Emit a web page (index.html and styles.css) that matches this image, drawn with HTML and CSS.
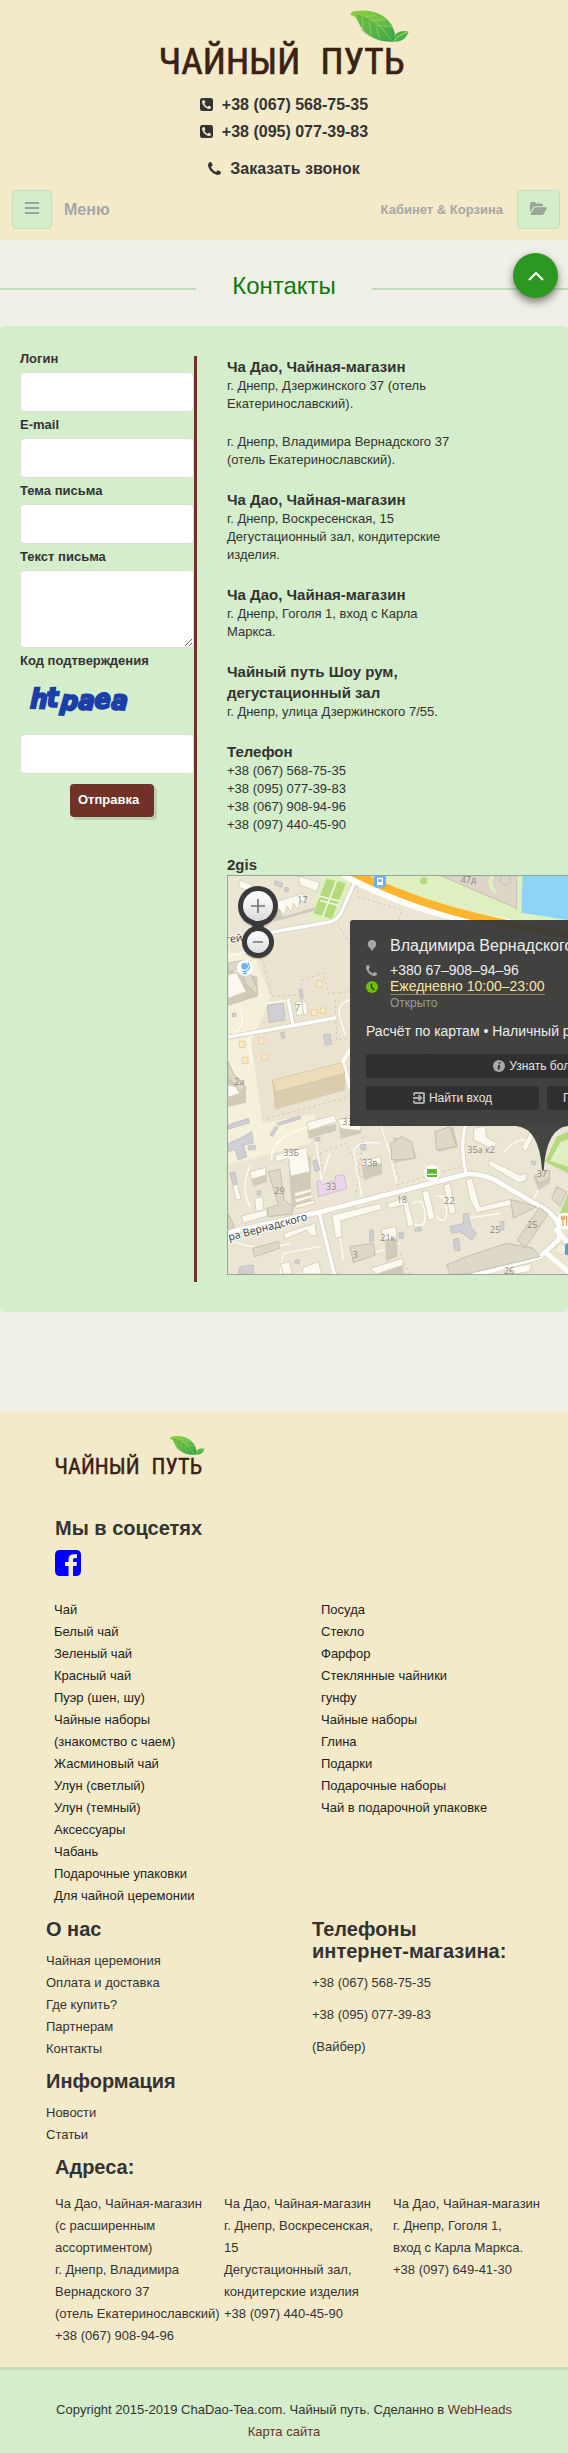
FILE: index.html
```html
<!DOCTYPE html>
<html lang="ru">
<head>
<meta charset="utf-8">
<meta name="viewport" content="width=device-width, initial-scale=1">
<title>Контакты — Чайный путь</title>
<link rel="stylesheet" href="styles.css">
</head>
<body>
<svg class="sprite" aria-hidden="true">
  <defs>
    <linearGradient id="leafA" x1="0" y1="0" x2="1" y2="1">
      <stop offset="0" stop-color="#8fd13a"/><stop offset=".5" stop-color="#6cc04a"/><stop offset="1" stop-color="#2f9c48"/>
    </linearGradient>
    <linearGradient id="knob" x1="0" y1="0" x2="0" y2="1">
      <stop offset="0" stop-color="#fff"/><stop offset="1" stop-color="#dcdcdc"/>
    </linearGradient>
    <symbol id="logo" viewBox="50 20 760 210">
      <path d="M655 85Q680 112 730 122L700 100Z" fill="#8a7f5a" opacity=".35"/>
      <path d="M628 44Q629 34 642 32C690 24 748 40 762 100L758 124C700 128 664 96 652 66Q644 46 628 44Z" fill="url(#leafA)"/>
      <path d="M644 38C690 52 722 72 752 122C728 118 680 106 658 76C650 56 650 46 644 38Z" fill="#4fae48" opacity=".55"/>
      <path d="M644 38Q710 56 752 120M672 48L706 46M690 60L734 58M706 76L752 78M664 50L666 84M684 62L690 102M706 80L716 114" fill="none" stroke="#b9e070" stroke-width="2" opacity=".8"/>
      <path d="M758 124C756 98 778 88 803 94C796 112 784 126 758 124Z" fill="#4bb248"/>
      <path d="M758 122Q774 102 800 95" fill="none" stroke="#a5dc6a" stroke-width="3"/>
      <text class="logo-text" x="52" y="220">ЧАЙНЫЙ</text>
      <text class="logo-text" x="538" y="220">ПУТЬ</text>
    </symbol>
    <symbol id="handset" viewBox="0 0 1408 1408">
      <path d="M1408 1112q0 27-10 70.500t-21 68.500q-21 50-122 106-94 51-186 51-27 0-53-3.500t-57.500-12.500-47-14.500-55.500-20.500-49-18q-98-35-175-83-127-79-264-216t-216-264q-48-77-83-175-3-9-18-49t-20.500-55.500-14.500-47-12.500-57.500-3.500-53q0-92 51-186 56-101 106-122 25-11 68.500-21t70.500-10q14 0 21 3 18 6 53 76 11 19 30 54t35 63.500 31 53.500q3 4 17.500 25t21.500 35.500 7 28.500q0 20-28.500 50t-62 55-62 53-28.500 46q0 9 5 22.500t8.500 20.500 14 24 11.500 19q76 137 174 235t235 174q2 1 19 11.500t24 14 20.500 8.500 22.500 5q18 0 46-28.500t53-62 55-62 50-28.500q14 0 28.500 7t35.500 21.500 25 17.500q25 15 53.500 31t63.500 35 54 30q70 35 76 53 3 7 3 21z"/>
    </symbol>
    <symbol id="phone-square" viewBox="0 0 14 14">
      <path fill-rule="evenodd" d="M2.500 0h9A2.500 2.500 0 0 1 14 2.500v9a2.500 2.500 0 0 1-2.500 2.500h-9A2.500 2.500 0 0 1 0 11.500v-9A2.500 2.500 0 0 1 2.500 0ZM3.800 2.200C2.300 2.800 1.900 4 2.500 5.700c1 2.700 3 4.800 5.900 6 1.700.6 2.900.1 3.400-1.400.1-.5.1-.7-.2-.9l-1.800-1c-.4-.2-.7 0-1.500 1-.2.200-.4.200-.7 0-1.300-.7-2.200-1.600-2.900-2.900-.2-.3-.1-.5.100-.7 1-.8 1.200-1.100 1-1.500l-1-1.900c-.2-.3-.5-.3-1-.2Z"/>
    </symbol>
  </defs>
</svg>

<header class="header">
  <a class="brand" href="#" aria-label="Чайный путь"><svg class="brand-logo"><use href="#logo"/></svg></a>
  <div class="phones">
    <a href="tel:+380675687535"><svg class="ico"><use href="#phone-square"/></svg>+38 (067) 568-75-35</a>
    <a href="tel:+380950773983"><svg class="ico"><use href="#phone-square"/></svg>+38 (095) 077-39-83</a>
  </div>
  <a class="callback" href="#"><svg class="ico"><use href="#handset"/></svg>Заказать звонок</a>
  <div class="bar">
    <button class="bar-btn" type="button" aria-label="Меню"><svg width="14" height="12" viewBox="0 0 14 12"><path d="M0 1h14M0 6h14M0 11h14" stroke="currentColor" stroke-width="2"/></svg></button>
    <span class="bar-menu">Меню</span>
    <span class="bar-cart">Кабинет &amp; Корзина</span>
    <button class="bar-btn bar-btn-wide" type="button" aria-label="Кабинет и корзина"><svg width="17" height="13" viewBox="0 0 17 13"><path fill="currentColor" d="M0 10.500V1.500Q0 0 1.500 0H4.500Q6 0 6 1.500H11.500Q13 1.500 13 3V4.200H5.500Q4 4.200 3 5.400ZM.6 12.200 3.800 6.500Q4.500 5.300 6 5.300H16.200Q17.300 5.300 16.700 6.400L13.900 11.700Q13.200 13 11.700 13H1.200Q.1 13 .6 12.200Z"/></svg></button>
  </div>
</header>

<main class="main">
  <button class="to-top" type="button" aria-label="Наверх"><svg width="16" height="10" viewBox="0 0 16 10"><path d="M1 9 8 2l7 7" fill="none" stroke="#fff" stroke-width="2"/></svg></button>
  <h1 class="title">Контакты</h1>
  <section class="panel">
    <form class="form">
      <label for="login">Логин</label>
      <input id="login" type="text">
      <label for="email">E-mail</label>
      <input id="email" type="email">
      <label for="subject">Тема письма</label>
      <input id="subject" type="text">
      <label for="message">Текст письма</label>
      <textarea id="message"></textarea>
      <label for="code">Код подтверждения</label>
      <svg class="captcha" viewBox="0 0 120 50">
        <g class="captcha-text">
          <text x="10" y="34" transform="rotate(2 10 34)">h</text>
          <text x="27" y="33" transform="rotate(-2 27 33)">t</text>
          <text x="40" y="35" transform="rotate(6 40 35)">p</text>
          <text x="58" y="35" transform="rotate(4 58 35)">a</text>
          <text x="75" y="35" transform="rotate(-5 75 35)">e</text>
          <text x="91" y="35" transform="rotate(4 91 35)">a</text>
        </g>
      </svg>
      <input id="code" type="text">
      <button class="submit" type="submit">Отправка</button>
    </form>
    <div class="info">
      <div class="shop"><h2>Ча Дао, Чайная-магазин</h2><p>г. Днепр, Дзержинского 37 (отель Екатеринославский).</p><p class="next">г. Днепр, Владимира Вернадского 37 (отель Екатеринославский).</p></div>
      <div class="shop"><h2>Ча Дао, Чайная-магазин</h2><p>г. Днепр, Воскресенская, 15<br>Дегустационный зал, кондитерские изделия.</p></div>
      <div class="shop"><h2>Ча Дао, Чайная-магазин</h2><p>г. Днепр, Гоголя 1, вход с Карла Маркса.</p></div>
      <div class="shop"><h2>Чайный путь Шоу рум, дегустационный зал</h2><p>г. Днепр, улица Дзержинского 7/55.</p></div>
      <div class="shop"><h2>Телефон</h2><p>+38 (067) 568-75-35<br>+38 (095) 077-39-83<br>+38 (067) 908-94-96<br>+38 (097) 440-45-90</p></div>
      <h2>2gis</h2>
      <div class="map">
        <svg class="map-canvas" viewBox="24 48 1020 1194" preserveAspectRatio="xMinYMin slice">
          <path fill="#ebe5d3" d="M24 48H1044V1242H24Z"/>
          <!-- lawns and yards -->
          <path fill="#f4f0da" d="M24 270 110 300 150 410 95 560 128 790 290 740 270 850 24 915Z"/>
          <path fill="#eae3d0" d="M110 250 340 200 390 260V740L128 790 95 540 160 410Z"/>
          <path fill="#dff0c0" d="M430 48H1044V270L900 215 640 150Z"/>
          <path fill="#dff0c0" d="M310 48H400L340 185H265Z"/>
          <path fill="#b4da7c" d="M320 56 378 70 335 176 280 160Z"/>
          <path stroke="#eef7dc" stroke-width="5" fill="none" d="M350 62 308 170M296 108 362 124M300 122 356 136"/>
          <path fill="#ddd6c8" stroke="#c9c0b2" stroke-width="3" d="M664 48H890V145Z"/>
          <path stroke="#dff0c0" stroke-width="12" fill="none" d="M818 48Q800 75 828 98"/>
          <circle cx="856" cy="60" r="15" fill="none" stroke="#c4bcae" stroke-width="3"/>
          <circle cx="611" cy="62" r="11" fill="#b4da7c"/>
          <path fill="#8cd5f9" d="M907 48H1044V180L904 158Z"/>
          <path fill="#b4da7c" d="M1010 830 1044 815V940L975 905ZM1020 1060 1044 1000V1100Z"/>
          <path fill="#dff0c0" d="M1022 845 1044 838V920L990 902Z"/>
          <!-- footpaths -->
          <g fill="none" stroke="#cdc6b4" stroke-width="3" stroke-dasharray="7 9">
            <path d="M120 270 155 408 240 405 245 360 310 340 325 400 390 395M345 420 350 540 390 535M140 775 390 710M355 190 390 255M410 60 415 110 545 150 530 200M300 880 380 850 430 960M300 880 310 940M530 975 720 920M430 830 400 1060M540 1180 570 1242M480 800 540 960"/>
          </g>
          <g fill="none" stroke="#fdfcf8" stroke-width="4">
            <path d="M24 290 80 275M85 530 95 610M135 430 210 420M60 450Q80 500 40 520M390 420Q345 430 362 480L376 525M270 800Q150 830 155 900M280 780 290 860 310 1000M480 790 510 880 530 970M400 870Q420 840 480 850M330 880 310 940M400 870 425 1010M580 1030Q610 1010 615 1060T580 1090M650 1010Q680 1000 680 1050T650 1070M850 880Q900 820 930 850M970 960 930 1040M90 920Q60 980 90 1040M24 1135Q100 1180 210 1150M180 1242 190 1180 300 1160M360 1130 370 1200M740 1075 840 1060M460 1180 540 1150"/>
          </g>
          <!-- streets -->
          <g fill="none" stroke="#d9d2c2" stroke-linejoin="round" stroke-linecap="round">
            <path stroke-width="19" d="M24 1118 300 1056 740 942Q800 940 850 975L970 1045Q1030 1080 1015 1140L960 1190 760 1242"/>
            <path stroke-width="15" d="M298 1060 344 1242M738 940Q715 840 745 770M24 532 345 474M205 420 218 492M100 226 330 186Q350 180 362 160L410 56"/>
          </g>
          <g fill="none" stroke="#fff" stroke-linejoin="round" stroke-linecap="round">
            <path stroke-width="14" d="M20 1118 300 1056 740 942Q800 940 850 975L970 1045Q1030 1080 1015 1140L960 1190 760 1246M980 1180 1044 1235M1010 1110 1044 1150"/>
            <path stroke-width="10" d="M298 1060 344 1246M738 940Q715 840 745 770M20 532 345 474M205 420 218 492M100 226 330 186Q350 180 362 160L412 50M390 570 368 605 390 680"/>
            <path stroke-width="36" d="M380 40Q560 140 780 180T1060 230"/>
          </g>
          <path fill="none" stroke="#ffb62e" stroke-width="24" d="M400 38Q580 128 780 174T1060 224"/>
          <!-- building shadows -->
          <g fill="#d2cab9">
            <path d="M156 662 375 640V690L168 748ZM204 890H272V1030L215 1042ZM24 330 112 350V410L24 438ZM24 640 78 680V728L24 740ZM262 810 348 792V812L266 836ZM358 800 424 790V820L362 836ZM425 920 486 905V942L432 960ZM520 830 575 850 590 895 524 908ZM650 820 700 800 714 860 655 875ZM92 950 140 938V966L100 980ZM495 1140 532 1130V1190L498 1204ZM150 100 190 170 290 140V150L160 186ZM940 950 990 930V970L955 990ZM470 1220 550 1205V1242H480Z"/>
          </g>
          <path fill="#ecdcb8" stroke="#d4c297" stroke-width="2" d="M158 660 365 608 375 640 166 696Z"/>
          <path fill="#d9cdae" d="M158 665 168 698 375 642V690L165 748Z"/>
          <g fill="#fcfaf0" stroke="#d8d1bf" stroke-width="3">
            <path d="M60 60 130 90 120 110 55 80ZM235 48 300 68 290 95 240 75ZM150 130 250 100 260 130 240 120 235 150 220 130 215 158 200 138 195 166 175 145 160 180Z"/>
            <path d="M226 426 244 424 250 462 230 468ZM246 426 258 424 264 460 250 466Z"/>
            <path d="M260 788 344 765 350 785 266 812ZM354 780 388 770 425 795 420 812 362 806Z"/>
            <path d="M165 885 262 862V885L270 935 212 948 206 895 168 905Z"/>
            <path d="M90 935 138 922V945L94 958ZM38 975 52 972 64 1018 48 1020ZM104 1015 128 1010 132 1050 108 1055ZM64 1068 140 1048 142 1068 70 1090Z"/>
            <path d="M222 1000 276 985V995L226 1010ZM224 1018 280 1003V1012L228 1028ZM226 1036 284 1020V1030L230 1046Z"/>
            <path d="M425 902 480 890 485 910 430 920Z"/>
            <path d="M336 1065 480 1030 486 1048 362 1082 366 1130 346 1135ZM500 1030 560 1012 582 1095 564 1102 550 1035 508 1045Z"/>
            <path d="M606 995 625 990 645 1075 625 1082ZM670 975 690 970 708 1058 690 1064ZM738 960 756 954 780 1040 872 1018 876 1035 770 1058 750 1020Z"/>
            <path d="M762 805 796 798 800 832 830 850 820 868 760 840ZM808 900 900 945 922 940 918 962 895 968 805 915ZM905 860 935 810 945 820 918 875Z"/>
            <path d="M485 1108 528 1100 530 1135 490 1140ZM450 1225 548 1195 550 1215 470 1242ZM182 1212 208 1205 218 1242H190ZM190 1120 285 1090 290 1130 270 1125 260 1110 195 1138ZM250 1222 296 1205 305 1242H245ZM868 1225 935 1210 930 1235 880 1242Z"/>
            <path d="M24 345 50 338 78 395 24 415ZM24 675 48 680 60 700 24 712Z"/>
          </g>
          <g fill="#ddd8c7" stroke="#c5bfae" stroke-width="3">
            <path d="M24 310 72 300 112 385V405L80 375 60 325 24 335ZM24 605 40 640 75 680 60 695 24 650ZM145 935 180 928 192 1020 220 1040 215 1062 145 1070 142 1045 175 1035Z"/>
            <path d="M98 1165 176 1144 178 1165 104 1190ZM390 1160 460 1150 466 1185 400 1208ZM872 1018 950 1040 880 1075ZM958 1042 984 1062 915 1165 892 1140ZM680 1215 740 1190 860 1150 940 1165 960 1190 740 1242H690ZM1010 980 1040 995 1020 1040 995 1015ZM945 945 988 930 990 955 955 970ZM24 1060 44 1100 24 1110ZM512 850 545 830 575 845 585 895 515 900ZM645 815 690 800 710 860 650 870Z"/>
          </g>
          <g fill="#cfcfd4" stroke="#b5b5ba" stroke-width="2">
            <path d="M142 436 190 430 195 480 148 488ZM310 525 330 522 334 552 316 556ZM24 795 85 775 88 788 24 808ZM24 850 60 835 95 815 100 850 70 855 80 890 55 900 45 868 24 875ZM150 825 166 798 173 803 158 830ZM170 790 240 768 242 776 176 796ZM278 905 290 898 300 930 286 935ZM30 940 44 936 52 972 40 976ZM238 390 246 388 250 416 242 418Z"/>
            <path d="M165 62 188 70 184 82 164 74ZM195 82 206 84 204 96 194 94ZM182 518 192 516 194 534 185 535ZM420 855 436 852 438 868 424 870ZM36 460 48 460 48 470 38 470ZM84 858 106 856 106 868 86 870ZM690 1100 730 1090 730 1062 745 1060 752 1100 770 1120 755 1140 720 1115 695 1120ZM700 1138 716 1135 720 1172 704 1172ZM450 1110H460V1145H448ZM536 1118 550 1118V1135H538ZM585 1105 602 1100 604 1112 586 1114ZM840 1085H852V1110H842ZM112 992H122V1005H112ZM284 834 300 832 300 842 286 844ZM60 1220 100 1215V1240H55ZM225 1200H238V1210H226ZM935 902 948 905 944 916 934 912Z"/>
          </g>
          <path fill="#ead8ea" stroke="#d3b9d8" stroke-width="3" d="M290 965 302 962 306 974 346 962V948L372 944 380 985 296 1010Z"/>
          <g fill="#fde8c2" stroke="#e6cfa0" stroke-width="3">
            <path d="M290 362H306V381H290ZM274 449H290V467H274ZM116 533H132V551H116ZM58 544H75V562H58ZM67 592H84V610H67ZM125 582H142V599H125ZM301 444H317V461H301Z"/>
          </g>
          <circle cx="1022" cy="1167" r="15" fill="#f5f1da" stroke="#ddd5bd" stroke-width="3"/>
          <g class="map-num">
            <text x="722" y="69">47д</text><text x="232" y="130">17</text><text x="225" y="454">7</text><text x="43" y="674">2а</text>
            <text x="518" y="298">47</text><text x="400" y="462">49а</text><text x="918" y="354">53</text><text x="550" y="422">49</text><text x="390" y="592">35л</text><text x="608" y="575">35п</text>
            <text x="367" y="794">33г</text><text x="504" y="797">35Б к1</text><text x="742" y="878">35а к2</text><text x="190" y="887">33Б</text>
            <text x="426" y="917">33в</text><text x="163" y="1001">29</text><text x="318" y="989">33</text><text x="530" y="1028">18</text><text x="672" y="1031">22</text>
            <text x="481" y="1142">21к</text><text x="398" y="1194">3</text><text x="810" y="1120">25</text><text x="921" y="1103">25</text><text x="950" y="950">37</text><text x="852" y="1242">26</text><text x="870" y="766">5</text><text x="956" y="772">8а</text>
          </g>
          <g class="map-street">
            <text x="18" y="250" transform="rotate(-8 18 250)">гей</text>
            <text x="28" y="1143" transform="rotate(-15 28 1143)">ра Вернадского</text>
          </g>
          <!-- map pins -->
          <rect x="462" y="46" width="36" height="37" rx="7" fill="#6db3ea"/>
          <path fill="#fff" fill-rule="evenodd" d="M471 53H489V75H471ZM475 58V66H485V58ZM472 77H477V79H472ZM483 77H488V79H483Z"/>
          <circle cx="75" cy="324" r="24" fill="#fff"/>
          <circle cx="74" cy="319" r="10" fill="#6db3ea"/><path d="M84 308Q95 326 78 334H66M75 334V341M68 341H82" fill="none" stroke="#6db3ea" stroke-width="4"/>
          <circle cx="636" cy="939" r="24" fill="#fff"/><path fill="#5cb82b" d="M623 927H649Q651 927 651 929V941H621V929Q621 927 623 927ZM621 945H651V950Q651 951 649 951H623Q621 951 621 949Z"/>
          <circle cx="1034" cy="1083" r="25" fill="#fff"/><path d="M1024 1067V1078M1029 1067V1098M1034 1067V1078M1024 1077H1034M1040 1067V1098" stroke="#f08a2c" stroke-width="3"/>
          <rect x="1035" y="1150" width="40" height="36" rx="7" fill="#4ba0e4"/>
          <!-- callout tail -->
          <path fill="#3a3a3a" opacity=".94" d="M888 798H1048Q980 800 971 930H966Q958 804 888 798Z"/>
          <!-- zoom control -->
          <circle cx="114" cy="143" r="60" fill="#000" opacity=".18"/><circle cx="114" cy="250" r="48" fill="#000" opacity=".18"/>
          <path fill="#3a3a3a" d="M82 170H146L130 200 146 225H82L98 200Z"/>
          <circle cx="114" cy="138" r="60" fill="#3a3a3a"/><circle cx="114" cy="246" r="48" fill="#3a3a3a"/>
          <circle cx="114" cy="138" r="45" fill="url(#knob)"/><circle cx="114" cy="246" r="33" fill="url(#knob)"/>
          <path d="M93 138H135M114 117V159M99 246H129" stroke="#757575" stroke-width="5"/>
        </svg>
        <div class="popup">
          <div class="popup-row popup-name"><svg viewBox="0 0 12 14"><path d="M6 0C9 0 11 2 11 5 11 8 8 9 6 13 4 9 1 8 1 5 1 2 3 0 6 0Z"/></svg>Владимира Вернадского, 37</div>
          <div class="popup-row"><svg viewBox="0 0 12 12"><use href="#handset" width="11" height="11"/></svg>+380 67–908–94–96</div>
          <div class="popup-row"><svg class="open" viewBox="0 0 12 12"><circle cx="6" cy="6" r="6"/><path d="M5.500 2.500V6.500L8.500 9" fill="none" stroke="#333" stroke-width="1.500"/></svg><a href="#">Ежедневно 10:00–23:00</a></div>
          <div class="popup-state">Открыто</div>
          <div class="popup-pay">Расчёт по картам • Наличный расчёт</div>
          <div class="popup-actions">
            <button class="wide" type="button"><svg viewBox="0 0 12 12"><circle cx="6" cy="6" r="6"/><path d="M6.800 2.200 6.500 3.600M6.200 5 5.500 9.500" fill="none" stroke="#333" stroke-width="2"/></svg>Узнать больше</button>
            <button type="button"><svg viewBox="0 0 12 12"><path d="M1 3.500V2Q1 1 2 1H10Q11 1 11 2V10Q11 11 10 11H2Q1 11 1 10V8.500M0 6H8M5.500 3.300 8.200 6 5.500 8.700" fill="none" stroke="#aaa" stroke-width="2"/></svg>Найти вход</button>
            <button class="route" type="button">Проехать сюда</button>
          </div>
        </div>
      </div>
    </div>
  </section>
</main>

<footer class="footer">
  <a class="footer-brand" href="#" aria-label="Чайный путь"><svg class="footer-logo"><use href="#logo"/></svg></a>
  <h3 class="inset">Мы в соцсетях</h3>
  <a class="social" href="#" aria-label="Facebook"><svg width="26" height="26" viewBox="0 0 26 26"><path fill="#00f" d="M5 0H21Q26 0 26 5V21Q26 26 21 26H18V16H21.500L22 12H18V9.500Q18 8 20 8H22V4.200H19Q13.500 4.200 13.500 9V12H10V16H13.500V26H5Q0 26 0 21V5Q0 0 5 0Z"/></svg></a>
  <div class="catalog">
    <ul>
      <li><a href="#">Чай</a></li><li><a href="#">Белый чай</a></li><li><a href="#">Зеленый чай</a></li><li><a href="#">Красный чай</a></li><li><a href="#">Пуэр (шен, шу)</a></li><li><a href="#">Чайные наборы<br>(знакомство с чаем)</a></li><li><a href="#">Жасминовый чай</a></li><li><a href="#">Улун (светлый)</a></li><li><a href="#">Улун (темный)</a></li><li><a href="#">Аксессуары</a></li><li><a href="#">Чабань</a></li><li><a href="#">Подарочные упаковки</a></li><li><a href="#">Для чайной церемонии</a></li>
    </ul>
    <ul>
      <li><a href="#">Посуда</a></li><li><a href="#">Стекло</a></li><li><a href="#">Фарфор</a></li><li><a href="#">Стеклянные чайники</a></li><li><a href="#">гунфу</a></li><li><a href="#">Чайные наборы</a></li><li><a href="#">Глина</a></li><li><a href="#">Подарки</a></li><li><a href="#">Подарочные наборы</a></li><li><a href="#">Чай в подарочной упаковке</a></li>
    </ul>
  </div>
  <div class="about">
    <div>
      <h3>О нас</h3>
      <ul><li><a href="#">Чайная церемония</a></li><li><a href="#">Оплата и доставка</a></li><li><a href="#">Где купить?</a></li><li><a href="#">Партнерам</a></li><li><a href="#">Контакты</a></li></ul>
      <h3>Информация</h3>
      <ul><li><a href="#">Новости</a></li><li><a href="#">Статьи</a></li></ul>
    </div>
    <div>
      <h3>Телефоны<br>интернет-магазина:</h3>
      <ul class="tel"><li>+38 (067) 568-75-35</li><li>+38 (095) 077-39-83</li><li>(Вайбер)</li></ul>
    </div>
  </div>
  <h3 class="inset">Адреса:</h3>
  <div class="addresses">
    <p>Ча Дао, Чайная-магазин<br>(с расширенным<br>ассортиментом)<br>г. Днепр, Владимира<br>Вернадского 37<br>(отель Екатеринославский)<br>+38 (067) 908-94-96</p>
    <p>Ча Дао, Чайная-магазин<br>г. Днепр, Воскресенская,<br>15<br>Дегустационный зал,<br>кондитерские изделия<br>+38 (097) 440-45-90</p>
    <p>Ча Дао, Чайная-магазин<br>г. Днепр, Гоголя 1,<br>вход с Карла Маркса.<br>+38 (097) 649-41-30</p>
  </div>
</footer>
<div class="copy">Copyright 2015-2019 ChaDao-Tea.com. Чайный путь. Сделанно в <a href="#">WebHeads</a><br><a href="#">Карта сайта</a></div>
</body>
</html>
```
FILE: styles.css
```css
* { box-sizing: border-box; }
body {
  margin: 0;
  background: #f1f0e8;
  color: #333;
  font: 13px/18px "Liberation Sans", Arial, sans-serif;
  overflow-x: hidden;
}
a { color: inherit; text-decoration: none; }
h1, h2, h3, p, ul { margin: 0; padding: 0; }
ul { list-style: none; }
svg { display: block; }
.sprite { position: absolute; width: 0; height: 0; }
.logo-text {
  font: 112px "Liberation Sans Narrow", "Roboto Condensed", "Liberation Sans", sans-serif;
  fill: #3b2113;
  stroke: #3b2113;
  stroke-width: 2px;
}

/* Header */
.header { background: #f3eaca; padding: 7px 0 11px; }
.brand { display: block; margin: 0 auto; width: 253px; }
.brand-logo { width: 253px; height: 70px; }
.phones { display: flex; flex-direction: column; align-items: center; padding-top: 14px; }
.phones a, .callback {
  display: flex;
  align-items: center;
  justify-content: center;
  gap: 9px;
  font-size: 16px;
  line-height: 27px;
  font-weight: bold;
}
.callback { margin: 10px 0 8px; }
.ico { width: 13px; height: 13px; fill: #333; }
.bar { display: flex; align-items: center; padding: 0 8px 0 12px; font-weight: bold; color: #a6a6a6; }
.bar-btn {
  display: grid;
  place-items: center;
  width: 40px;
  height: 39px;
  padding: 0 0 3px;
  color: #9ca697;
  background: #d4edca;
  border: 1px solid #c4dfbe;
  border-radius: 4px;
}
.bar-btn-wide { width: 43px; }
.bar-menu { font-size: 16px; margin-left: 12px; }
.bar-cart { margin: 0 14px 0 auto; }

/* Page body */
.main { position: relative; padding: 30px 0 100px; }
.to-top {
  position: absolute;
  top: 13px;
  right: 10px;
  display: grid;
  place-items: center;
  width: 45px;
  height: 45px;
  padding: 0;
  border: 0;
  border-radius: 50%;
  background: #2c9822;
  box-shadow: 0 4px 8px rgba(0, 0, 0, .5);
}
.title {
  display: flex;
  align-items: center;
  gap: 36px;
  color: #0b7a0b;
  font-size: 24px;
  line-height: 32px;
  font-weight: normal;
}
.title::before, .title::after { content: ""; flex: 1; height: 2px; margin-top: 6px; background: #c4dfbe; }
.panel {
  display: flex;
  margin-top: 24px;
  padding: 20px 0 30px 20px;
  background: #d4edca;
  border-radius: 5px;
  overflow: hidden;
}
.form { flex: none; width: 174px; font-weight: bold; }
.form label { display: block; line-height: 26px; }
.form input, .form textarea {
  display: block;
  width: 100%;
  height: 40px;
  padding: 8px;
  background: #fff;
  border: 1px solid #dcdcdc;
  border-radius: 4px;
  font: inherit;
}
.form textarea { height: 78px; }
.captcha { width: 120px; height: 50px; margin-bottom: 10px; }
.captcha-text {
  font: italic bold 27px "DejaVu Sans Condensed", "DejaVu Sans", sans-serif;
  fill: #1c3ea8;
  stroke: #1c3ea8;
  stroke-width: 2px;
}
.submit {
  display: block;
  width: 84px;
  height: 33px;
  margin: 10px 0 0 50px;
  padding: 0 8px 2px;
  color: #fff;
  background: #6f3128;
  border: 0;
  border-radius: 4px;
  box-shadow: 3px 3px 0 rgba(0, 0, 0, .12);
  font: inherit;
  text-align: left;
}
.info {
  flex: 1;
  min-width: 0;
  margin-top: 10px;
  padding: 0 0 7px 30px;
  border-left: 3px solid #6f3128;
}
.info h2 { font-size: 15px; line-height: 21px; }
.shop { max-width: 232px; margin-bottom: 20px; }
.next { margin-top: 20px; }

/* Map */
.map { position: relative; height: 400px; border: 1px solid #a0a39c; border-right: 0; overflow: hidden; }
.map-canvas { width: 100%; height: 398px; }
.map-num { font: 27px "Open Sans", "Noto Sans", sans-serif; fill: #8d897f; }
.map-street { font: 32px "Noto Sans", sans-serif; fill: #444; stroke: #fff; stroke-width: 6px; paint-order: stroke; }
.popup {
  position: absolute;
  left: 122px;
  top: 44px;
  width: 386px;
  padding: 16px;
  color: #ededed;
  background: rgba(54, 54, 54, .94);
  border-radius: 3px 3px 0 0;
  font-size: 14px;
  line-height: 17px;
}
.popup svg { flex: none; width: 12px; height: 12px; fill: #a8a8a8; }
.popup-row { display: flex; align-items: center; gap: 12px; }
.popup-name { font-size: 16px; line-height: 20px; margin-bottom: 6px; }
.popup .open { fill: #6fbf00; }
.popup-row a { color: #fbe3a4; border-bottom: 1px solid #97855a; line-height: 15px; }
.popup-state { padding-left: 24px; font-size: 12px; color: #999; }
.popup-pay { margin: 11px 0 14px; }
.popup-actions { display: grid; grid-template-columns: 1fr 1fr; gap: 8px; }
.popup-actions button {
  display: flex;
  align-items: center;
  justify-content: center;
  gap: 4px;
  height: 24px;
  padding: 0 16px;
  color: #e4e4e4;
  background: #303030;
  border: 0;
  border-radius: 2px;
  font: 12px "Liberation Sans", Arial, sans-serif;
}
.popup-actions .wide { grid-column: 1 / 3; }
.popup-actions .route { justify-content: flex-start; }

/* Footer */
.footer { background: #f3eaca; padding: 22px 0 20px; line-height: 22px; }
.footer h3 { font-size: 20px; line-height: 22px; }
.footer .inset { margin-left: 55px; }
.footer-brand { display: block; width: 152px; margin: 0 0 41px 54px; }
.footer-logo { width: 152px; height: 42px; }
.social { display: block; width: 26px; margin: 11px 0 23px 55px; }
.catalog { display: grid; grid-template-columns: 1fr 1fr; padding: 0 0 11px 54px; margin-right: -20px; color: #222; }
.about { display: grid; grid-template-columns: 1fr 1fr; padding: 0 0 0 46px; margin-right: -10px; }
.about ul { margin: 10px 0; }
.about .tel li { margin-bottom: 10px; }
.addresses { display: grid; grid-template-columns: repeat(3, 1fr); padding: 15px 6px 0 55px; }
.copy {
  padding: 29px 0 10px;
  background: #d4edca;
  border-top: 3px solid #c4dfbe;
  line-height: 22px;
  text-align: center;
}
.copy a { color: #6f3128; }
```
